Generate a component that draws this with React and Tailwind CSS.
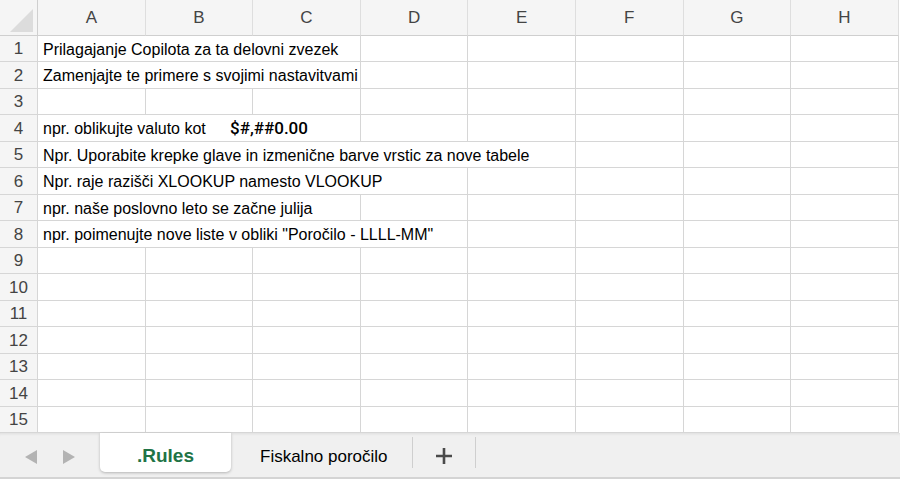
import React from 'react';

const COLS = ['A', 'B', 'C', 'D', 'E', 'F', 'G', 'H'];

const ROWS = [
  { span: 3, text: 'Prilagajanje Copilota za ta delovni zvezek' },
  { span: 3, text: 'Zamenjajte te primere s svojimi nastavitvami' },
  null,
  { span: 3, text: 'npr. oblikujte valuto kot', extra: '$#,##0.00' },
  { span: 5, text: 'Npr. Uporabite krepke glave in izmenične barve vrstic za nove tabele' },
  { span: 4, text: 'Npr. raje razišči XLOOKUP namesto VLOOKUP' },
  { span: 3, text: 'npr. naše poslovno leto se začne julija' },
  { span: 4, text: 'npr. poimenujte nove liste v obliki "Poročilo - LLLL-MM"' },
  null, null, null, null, null, null, null,
];

const spanClass = {
  3: 'col-span-3',
  4: 'col-span-4',
  5: 'col-span-5',
};

const Cell = ({ className = '', children }) => (
  <div className={`border-r border-b border-[#d6d6d6] bg-white ${className}`}>{children}</div>
);

const Row = ({ index, data }) => {
  const cells = [];
  let used = 0;
  if (data) {
    cells.push(
      <Cell key="t" className={`${spanClass[data.span]} flex items-center pl-[5px] pt-[2px] overflow-hidden whitespace-nowrap text-[16px] text-black`}>
        {data.extra ? (
          <>
            <span className="w-[187px] shrink-0">{data.text}</span>
            <span className="font-['Roboto',sans-serif] font-medium text-[17px]">{data.extra}</span>
          </>
        ) : (
          data.text
        )}
      </Cell>
    );
    used = data.span;
  }
  for (let i = used; i < 8; i++) cells.push(<Cell key={i} />);

  return (
    <>
      <div className="bg-[#f5f5f5] border-r border-b border-[#d6d6d6] flex items-center justify-center pt-[1px] text-[17px] text-[#444]">
        {index + 1}
      </div>
      {cells}
    </>
  );
};

export default function App() {
  return (
    <div className="w-[900px] h-[479px] flex flex-col bg-white overflow-hidden font-['Liberation_Sans',Arial,sans-serif]">
      <div className="grid grid-cols-[38px_repeat(8,107.6px)] grid-rows-[36px_repeat(15,26.47px)]">
        <div className="bg-[#f5f5f5] border-r border-b border-[#cfcfcf] flex items-end justify-end pr-[4px] pb-[3px]">
          <svg width="23" height="23" viewBox="0 0 23 23">
            <polygon points="23,0 23,23 0,23" fill="#dcdcdc" />
          </svg>
        </div>
        {COLS.map((c) => (
          <div
            key={c}
            className="bg-[#f5f5f5] border-r border-[#dedede] border-b border-b-[#cfcfcf] flex items-center justify-center text-[17px] text-[#444]"
          >
            {c}
          </div>
        ))}
        {ROWS.map((r, i) => (
          <Row key={i} index={i} data={r} />
        ))}
      </div>

      <div className="flex-1 flex items-start bg-[#f0f0f0] border-b-2 border-[#d4d4d4] shadow-[inset_0_3px_3px_-2px_rgba(0,0,0,0.08)]">
        <div className="w-[100px] h-full flex items-center gap-[26px] pl-[25px] pt-[4px]">
          <svg width="12" height="14" viewBox="0 0 12 14">
            <polygon points="12,0 12,14 0,7" fill="#b3b3b3" />
          </svg>
          <svg width="12" height="14" viewBox="0 0 12 14">
            <polygon points="0,0 0,14 12,7" fill="#b3b3b3" />
          </svg>
        </div>
        <div className="w-[131px] h-[39px] bg-white rounded-b-[5px] shadow-[0_1px_3px_rgba(0,0,0,0.25)] flex items-center justify-center pt-[8px] text-[19px] font-bold text-[#217346]">
          .Rules
        </div>
        <div className="w-[181px] h-full flex items-center pl-[29px] pt-[4px] text-[17px] text-black">
          Fiskalno poročilo
        </div>
        <div className="w-px h-[31px] mt-[4px] bg-[#cfcfcf]" />
        <div className="w-[62px] h-full flex items-center justify-center pt-[2px]">
          <svg width="18" height="18" viewBox="0 0 18 18">
            <path d="M9 1v16M1 9h16" stroke="#4a4a4a" strokeWidth="2.6" />
          </svg>
        </div>
        <div className="w-px h-[31px] mt-[4px] bg-[#cfcfcf]" />
      </div>
    </div>
  );
}
